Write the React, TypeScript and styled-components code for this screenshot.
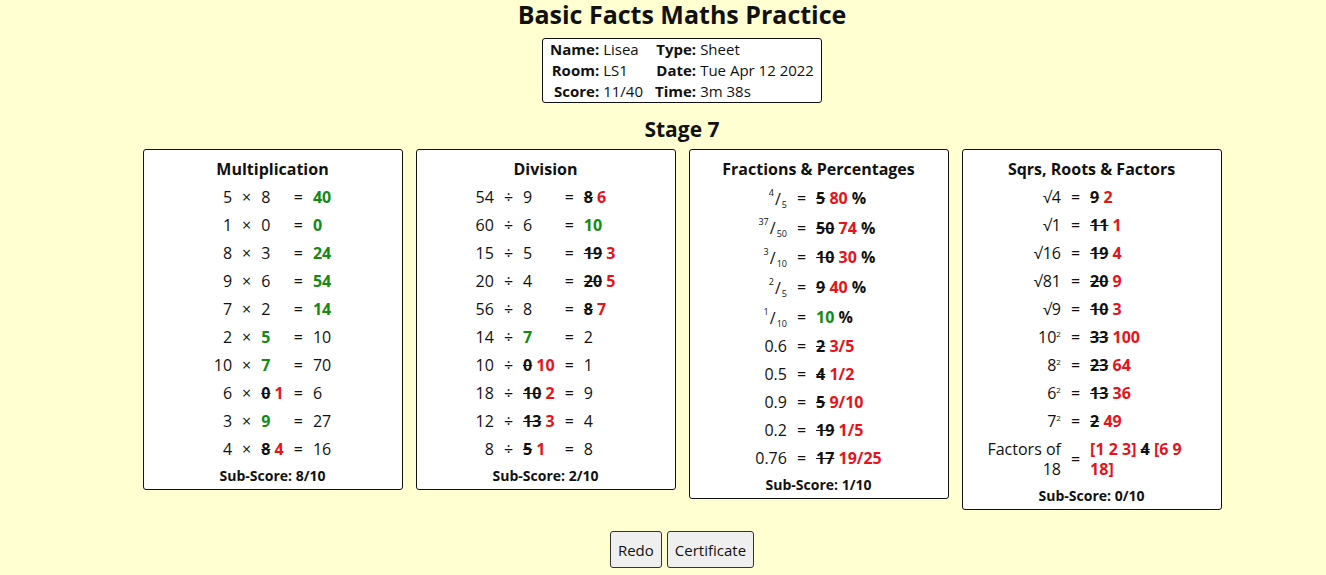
import React from 'react'
import styled, { createGlobalStyle } from 'styled-components'

const GlobalStyle = createGlobalStyle`
    body {
        margin: 0;
        background: #ffffd2;
        font-family: 'Open Sans', 'DejaVu Sans', sans-serif;
        color: #111;
    }
`

const Page = styled.div`
    padding-left: 38px;
    text-align: center;
`

const Title = styled.h1`
    margin: 0;
    font-size: 25px;
    line-height: 28px;
    font-weight: 700;
`

const InfoBox = styled.div`
    display: inline-grid;
    grid-template-columns: auto auto auto auto;
    margin-top: 10px;
    padding: 0 7px;
    background: #fff;
    border: 1px solid #111;
    border-radius: 3px;
    font-size: 15px;
    line-height: 21px;
`

const InfoLabel = styled.span`
    font-weight: 700;
    text-align: right;
    padding-right: 4px;
`

const InfoValue = styled.span<{ $wide?: boolean }>`
    text-align: left;
    padding-right: ${(p) => (p.$wide ? '12px' : '0')};
`

const Stage = styled.h2`
    margin: 14px 0 8px;
    font-size: 21px;
    line-height: 24px;
    font-weight: 700;
`

const Cards = styled.div`
    display: flex;
    justify-content: center;
    align-items: flex-start;
    gap: 13px;
`

const Card = styled.section`
    width: 258px;
    padding: 8px 0 4px;
    background: #fff;
    border: 1px solid #111;
    border-radius: 3px;
`

const CardTitle = styled.div`
    font-size: 16px;
    line-height: 22px;
    font-weight: 700;
    margin-bottom: 3px;
`

const Sums = styled.table`
    margin: 0 auto;
    border-collapse: collapse;
    font-size: 16px;
    line-height: 20px;

    td {
        padding: 4px 5px;
        vertical-align: middle;
    }
`

const Left = styled.td`
    text-align: right;
`

const Mid = styled.td`
    text-align: center;
`

const Right = styled.td`
    text-align: left;
`

const SubScore = styled.div`
    margin-top: 4px;
    font-size: 14px;
    line-height: 18px;
    font-weight: 700;
`

const Ok = styled.b`
    color: #138a13;
`

const Bad = styled.b`
    color: #e8121a;
`

const Struck = styled.b`
    text-decoration: line-through;
`

const Frac = styled.span`
    display: inline-flex;
    height: 22px;
    margin: -1px 0;
    vertical-align: middle;
`

const FracNum = styled.span<{ $low?: boolean }>`
    font-size: 9px;
    line-height: 10px;
    align-self: ${(p) => (p.$low ? 'flex-end' : 'flex-start')};
`

const FracBar = styled.span`
    line-height: 22px;
    padding: 0 1px;
`

const Sq = styled.sup`
    font-size: 8px;
    line-height: 0;
`

const Wrap = styled.span<{ $width: number }>`
    display: inline-block;
    max-width: ${(p) => p.$width}px;
`

const Buttons = styled.div`
    display: flex;
    justify-content: center;
    gap: 5px;
    margin-top: 21px;
`

const Button = styled.button`
    height: 37px;
    padding: 0 7px;
    background: #efefef;
    border: 1px solid #333;
    border-radius: 3px;
    font-family: inherit;
    font-size: 15px;
    color: #111;
`

type Row = [React.ReactNode, string, React.ReactNode, React.ReactNode]

const mult: Row[] = [
    ['5', '×', '8', <Ok>40</Ok>],
    ['1', '×', '0', <Ok>0</Ok>],
    ['8', '×', '3', <Ok>24</Ok>],
    ['9', '×', '6', <Ok>54</Ok>],
    ['7', '×', '2', <Ok>14</Ok>],
    ['2', '×', <Ok>5</Ok>, '10'],
    ['10', '×', <Ok>7</Ok>, '70'],
    ['6', '×', <><Struck>0</Struck> <Bad>1</Bad></>, '6'],
    ['3', '×', <Ok>9</Ok>, '27'],
    ['4', '×', <><Struck>8</Struck> <Bad>4</Bad></>, '16'],
]

const div: Row[] = [
    ['54', '÷', '9', <><Struck>8</Struck> <Bad>6</Bad></>],
    ['60', '÷', '6', <Ok>10</Ok>],
    ['15', '÷', '5', <><Struck>19</Struck> <Bad>3</Bad></>],
    ['20', '÷', '4', <><Struck>20</Struck> <Bad>5</Bad></>],
    ['56', '÷', '8', <><Struck>8</Struck> <Bad>7</Bad></>],
    ['14', '÷', <Ok>7</Ok>, '2'],
    ['10', '÷', <><Struck>0</Struck> <Bad>10</Bad></>, '1'],
    ['18', '÷', <><Struck>10</Struck> <Bad>2</Bad></>, '9'],
    ['12', '÷', <><Struck>13</Struck> <Bad>3</Bad></>, '4'],
    ['8', '÷', <><Struck>5</Struck> <Bad>1</Bad></>, '8'],
]

const fraction = (top: string, bottom: string) => (
    <Frac>
        <FracNum>{top}</FracNum>
        <FracBar>/</FracBar>
        <FracNum $low>{bottom}</FracNum>
    </Frac>
)

const wrongRight = (wrong: string, right: string) => (
    <>
        <Struck>{wrong}</Struck> <Bad>{right}</Bad>
    </>
)

const fractions: [React.ReactNode, React.ReactNode][] = [
    [fraction('4', '5'), <>{wrongRight('5', '80')} <b>%</b></>],
    [fraction('37', '50'), <>{wrongRight('50', '74')} <b>%</b></>],
    [fraction('3', '10'), <>{wrongRight('10', '30')} <b>%</b></>],
    [fraction('2', '5'), <>{wrongRight('9', '40')} <b>%</b></>],
    [fraction('1', '10'), <><Ok>10</Ok> <b>%</b></>],
    ['0.6', wrongRight('2', '3/5')],
    ['0.5', wrongRight('4', '1/2')],
    ['0.9', wrongRight('5', '9/10')],
    ['0.2', wrongRight('19', '1/5')],
    ['0.76', wrongRight('17', '19/25')],
]

const squares: [React.ReactNode, React.ReactNode][] = [
    ['√4', wrongRight('9', '2')],
    ['√1', wrongRight('11', '1')],
    ['√16', wrongRight('19', '4')],
    ['√81', wrongRight('20', '9')],
    ['√9', wrongRight('10', '3')],
    [<>10<Sq>2</Sq></>, wrongRight('33', '100')],
    [<>8<Sq>2</Sq></>, wrongRight('23', '64')],
    [<>6<Sq>2</Sq></>, wrongRight('13', '36')],
    [<>7<Sq>2</Sq></>, wrongRight('2', '49')],
    [
        <Wrap $width={80}>Factors of 18</Wrap>,
        <Wrap $width={112}>
            <Bad>[1 2 3]</Bad> <Struck>4</Struck> <Bad>[6 9 18]</Bad>
        </Wrap>,
    ],
]

const OpCard: React.FC<{ title: string; rows: Row[]; score: string }> = ({ title, rows, score }) => (
    <Card>
        <CardTitle>{title}</CardTitle>
        <Sums>
            <tbody>
                {rows.map(([a, op, b, ans], i) => (
                    <tr key={i}>
                        <Left>{a}</Left>
                        <Mid>{op}</Mid>
                        <Right>{b}</Right>
                        <Mid>=</Mid>
                        <Right>{ans}</Right>
                    </tr>
                ))}
            </tbody>
        </Sums>
        <SubScore>Sub-Score: {score}</SubScore>
    </Card>
)

const QCard: React.FC<{ title: string; rows: [React.ReactNode, React.ReactNode][]; score: string }> = ({
    title,
    rows,
    score,
}) => (
    <Card>
        <CardTitle>{title}</CardTitle>
        <Sums>
            <tbody>
                {rows.map(([q, ans], i) => (
                    <tr key={i}>
                        <Left>{q}</Left>
                        <Mid>=</Mid>
                        <Right>{ans}</Right>
                    </tr>
                ))}
            </tbody>
        </Sums>
        <SubScore>Sub-Score: {score}</SubScore>
    </Card>
)

const App: React.FC = () => {
    return (
        <Page>
            <GlobalStyle />
            <Title>Basic Facts Maths Practice</Title>
            <InfoBox>
                <InfoLabel>Name:</InfoLabel>
                <InfoValue $wide>Lisea</InfoValue>
                <InfoLabel>Type:</InfoLabel>
                <InfoValue>Sheet</InfoValue>
                <InfoLabel>Room:</InfoLabel>
                <InfoValue $wide>LS1</InfoValue>
                <InfoLabel>Date:</InfoLabel>
                <InfoValue>Tue Apr 12 2022</InfoValue>
                <InfoLabel>Score:</InfoLabel>
                <InfoValue $wide>11/40</InfoValue>
                <InfoLabel>Time:</InfoLabel>
                <InfoValue>3m 38s</InfoValue>
            </InfoBox>
            <Stage>Stage 7</Stage>
            <Cards>
                <OpCard title="Multiplication" rows={mult} score="8/10" />
                <OpCard title="Division" rows={div} score="2/10" />
                <QCard title="Fractions & Percentages" rows={fractions} score="1/10" />
                <QCard title="Sqrs, Roots & Factors" rows={squares} score="0/10" />
            </Cards>
            <Buttons>
                <Button>Redo</Button>
                <Button>Certificate</Button>
            </Buttons>
        </Page>
    )
}

export default App
